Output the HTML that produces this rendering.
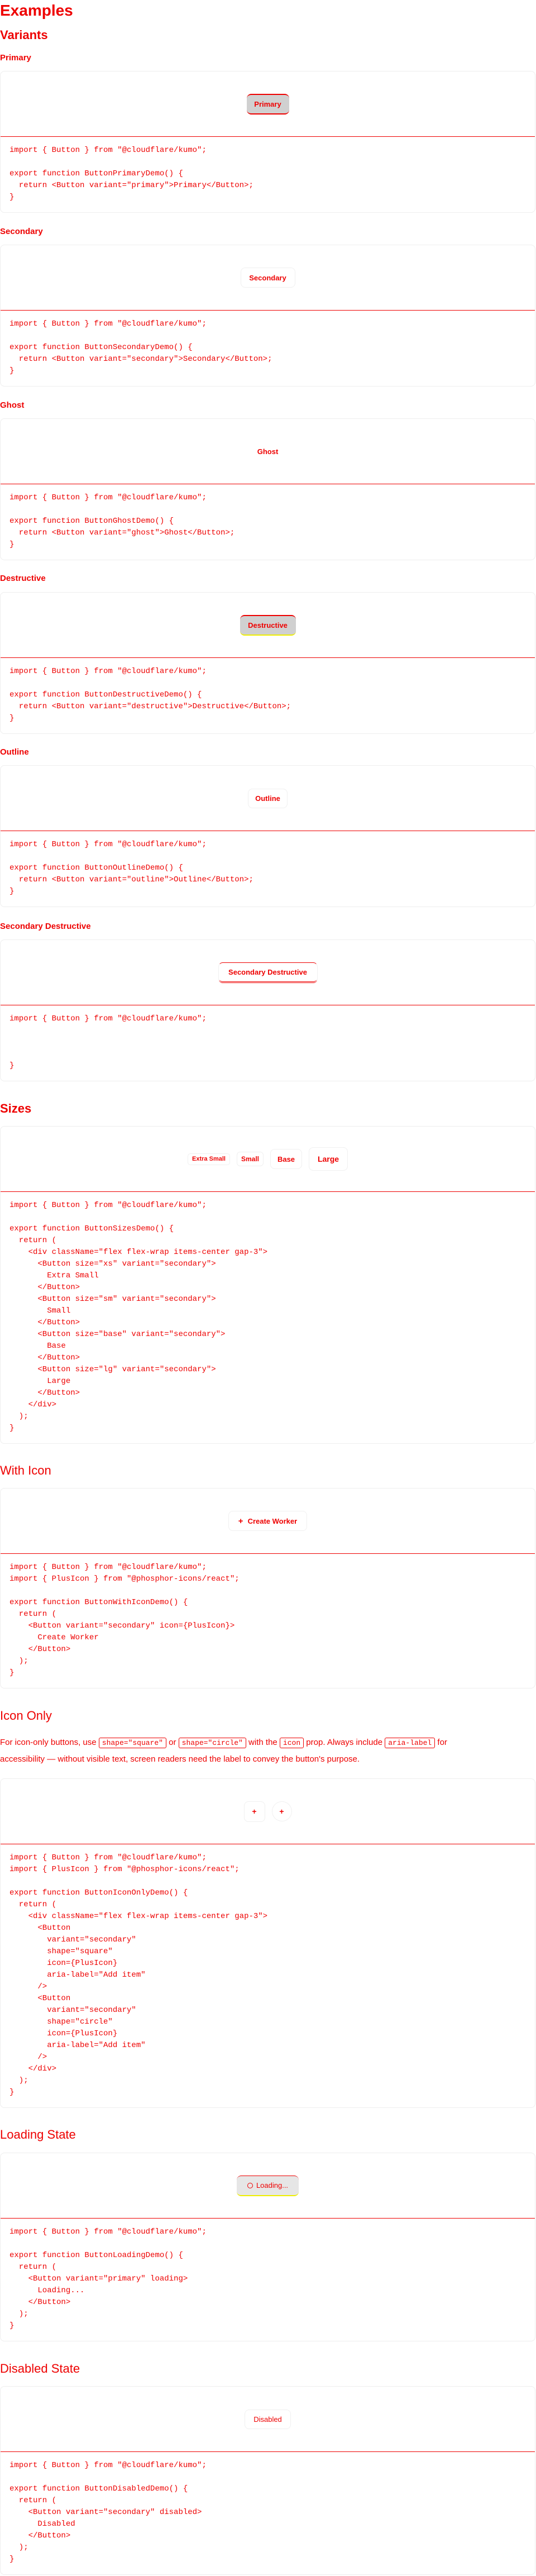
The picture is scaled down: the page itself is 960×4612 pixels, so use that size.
<!DOCTYPE html>
<html><head><meta charset="utf-8">
<style>
*{box-sizing:border-box;margin:0;padding:0}
html,body{width:960px;height:4612px;background:#fff;overflow:hidden}
body{position:relative;font-family:"Liberation Sans",sans-serif;color:#e00}
.h{position:absolute;left:0;white-space:nowrap;line-height:1}
.h1{font-size:28px;font-weight:700}
.h2{font-size:22px;font-weight:700}
.h3{font-size:15px;font-weight:700}
.card{position:absolute;left:0;width:959px;border:1px solid #eee;border-radius:8px;background:#fff;overflow:hidden}
.pv{height:117px;display:flex;align-items:center;justify-content:center;gap:12px;border-bottom:1px solid #e00}
pre{font-family:"Liberation Mono",monospace;font-size:14px;line-height:21px;padding:14px 16px 16px;color:#e00;white-space:pre}
.b{display:inline-flex;align-items:center;justify-content:center;font-size:13px;font-weight:600;border-radius:8px;border:1px solid #f0f0f0;background:#fff;color:#e00;white-space:nowrap}
.p{font-size:15px;line-height:29px;position:absolute;left:0;top:3105px;width:885px}
.p code{font-family:"Liberation Mono",monospace;font-size:13px;border:1px solid #e00;border-radius:3px;padding:1px 5px}
</style></head><body>

<div class="h h1" style="top:5px">Examples</div>
<div class="h h2" style="top:52px">Variants</div>
<div class="h h3" style="top:96px">Primary</div>

<div class="card" style="top:127px">
<div class="pv"><span class="b" style="width:76px;height:37px;background:#d0d0d0;border:0;border-top:2px solid #e00;border-bottom:2px solid #e00">Primary</span></div>
<pre>import { Button } from "@cloudflare/kumo";

export function ButtonPrimaryDemo() {
  return &lt;Button variant="primary"&gt;Primary&lt;/Button&gt;;
}</pre></div>

<div class="h h3" style="top:407px">Secondary</div>
<div class="card" style="top:438px">
<div class="pv"><span class="b" style="width:98px;height:36px">Secondary</span></div>
<pre>import { Button } from "@cloudflare/kumo";

export function ButtonSecondaryDemo() {
  return &lt;Button variant="secondary"&gt;Secondary&lt;/Button&gt;;
}</pre></div>

<div class="h h3" style="top:718px">Ghost</div>
<div class="card" style="top:749px">
<div class="pv"><span class="b" style="width:70px;height:36px;border:0">Ghost</span></div>
<pre>import { Button } from "@cloudflare/kumo";

export function ButtonGhostDemo() {
  return &lt;Button variant="ghost"&gt;Ghost&lt;/Button&gt;;
}</pre></div>

<div class="h h3" style="top:1028px">Destructive</div>
<div class="card" style="top:1060px">
<div class="pv"><span class="b" style="width:100px;height:37px;background:#d0d0d0;border:0;border-top:2px solid #e00;border-bottom:2px solid #ee0">Destructive</span></div>
<pre>import { Button } from "@cloudflare/kumo";

export function ButtonDestructiveDemo() {
  return &lt;Button variant="destructive"&gt;Destructive&lt;/Button&gt;;
}</pre></div>

<div class="h h3" style="top:1339px">Outline</div>
<div class="card" style="top:1370px">
<div class="pv"><span class="b" style="width:71px;height:35px">Outline</span></div>
<pre>import { Button } from "@cloudflare/kumo";

export function ButtonOutlineDemo() {
  return &lt;Button variant="outline"&gt;Outline&lt;/Button&gt;;
}</pre></div>

<div class="h h3" style="top:1651px">Secondary Destructive</div>
<div class="card" style="top:1682px">
<div class="pv"><span class="b" style="width:178px;height:37px;border-top:1px solid #e00;border-bottom:3px double #e00">Secondary Destructive</span></div>
<pre>import { Button } from "@cloudflare/kumo";



}</pre></div>

<div class="h h2" style="top:1974px">Sizes</div>
<div class="card" style="top:2016px">
<div class="pv">
<span class="b" style="width:76px;height:21px;font-size:11px;border-radius:5px">Extra Small</span>
<span class="b" style="width:48px;height:26px;font-size:12px;border-radius:6px">Small</span>
<span class="b" style="width:57px;height:36px">Base</span>
<span class="b" style="width:70px;height:42px;font-size:14px">Large</span>
</div>
<pre>import { Button } from "@cloudflare/kumo";

export function ButtonSizesDemo() {
  return (
    &lt;div className="flex flex-wrap items-center gap-3"&gt;
      &lt;Button size="xs" variant="secondary"&gt;
        Extra Small
      &lt;/Button&gt;
      &lt;Button size="sm" variant="secondary"&gt;
        Small
      &lt;/Button&gt;
      &lt;Button size="base" variant="secondary"&gt;
        Base
      &lt;/Button&gt;
      &lt;Button size="lg" variant="secondary"&gt;
        Large
      &lt;/Button&gt;
    &lt;/div&gt;
  );
}</pre></div>

<div class="h h2" style="top:2622px;font-weight:400">With Icon</div>
<div class="card" style="top:2664px">
<div class="pv"><span class="b" style="width:141px;height:36px;gap:8px"><span style="font-size:15px">+</span>Create Worker</span></div>
<pre>import { Button } from "@cloudflare/kumo";
import { PlusIcon } from "@phosphor-icons/react";

export function ButtonWithIconDemo() {
  return (
    &lt;Button variant="secondary" icon={PlusIcon}&gt;
      Create Worker
    &lt;/Button&gt;
  );
}</pre></div>

<div class="h h2" style="top:3061px;font-weight:400">Icon Only</div>
<div class="p">For icon-only buttons, use <code>shape="square"</code> or <code>shape="circle"</code> with the <code>icon</code> prop. Always include <code>aria-label</code> for accessibility — without visible text, screen readers need the label to convey the button's purpose.</div>
<div class="card" style="top:3184px">
<div class="pv"><span class="b" style="width:38px;height:37px;font-size:14px">+</span><span class="b" style="width:36px;height:36px;border-radius:50%;font-size:14px">+</span></div>
<pre>import { Button } from "@cloudflare/kumo";
import { PlusIcon } from "@phosphor-icons/react";

export function ButtonIconOnlyDemo() {
  return (
    &lt;div className="flex flex-wrap items-center gap-3"&gt;
      &lt;Button
        variant="secondary"
        shape="square"
        icon={PlusIcon}
        aria-label="Add item"
      /&gt;
      &lt;Button
        variant="secondary"
        shape="circle"
        icon={PlusIcon}
        aria-label="Add item"
      /&gt;
    &lt;/div&gt;
  );
}</pre></div>

<div class="h h2" style="top:3811px;font-weight:400">Loading State</div>
<div class="card" style="top:3854px">
<div class="pv"><span class="b" style="width:111px;height:37px;background:#e6e6e6;border:0;border-top:1px solid #e00;border-bottom:2px solid #ee0;gap:6px;font-weight:400"><span style="display:inline-block;width:10px;height:10px;border:1.5px solid #e00;border-radius:50%"></span>Loading...</span></div>
<pre>import { Button } from "@cloudflare/kumo";

export function ButtonLoadingDemo() {
  return (
    &lt;Button variant="primary" loading&gt;
      Loading...
    &lt;/Button&gt;
  );
}</pre></div>

<div class="h h2" style="top:4230px;font-weight:400">Disabled State</div>
<div class="card" style="top:4272px">
<div class="pv"><span class="b" style="width:83px;height:35px;font-weight:400">Disabled</span></div>
<pre>import { Button } from "@cloudflare/kumo";

export function ButtonDisabledDemo() {
  return (
    &lt;Button variant="secondary" disabled&gt;
      Disabled
    &lt;/Button&gt;
  );
}</pre></div>

</body></html>
